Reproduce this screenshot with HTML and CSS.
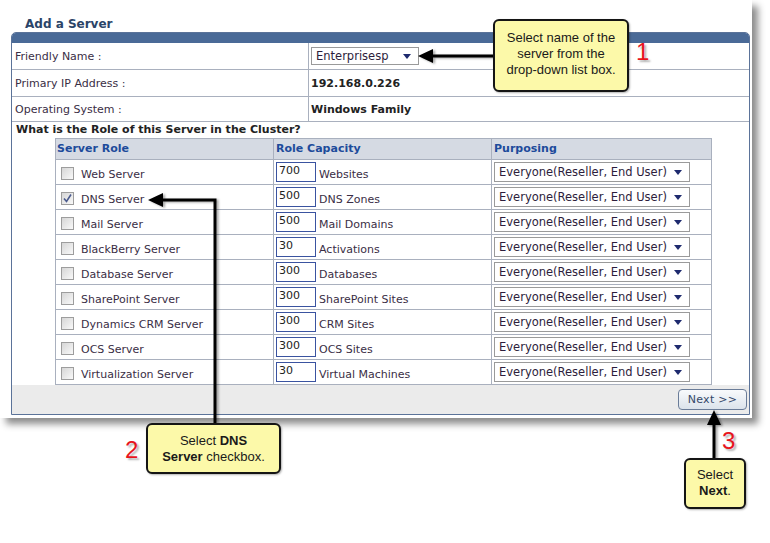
FILE: index.html
```html
<!DOCTYPE html>
<html lang="en">
<head>
  <meta charset="UTF-8">
  <title>Add a Server</title>
  <link rel="stylesheet" href="styles.css">
</head>
<body>
  <div class="screen">
    <h1 class="page-title">Add a Server</h1>

    <div class="panel">
      <div class="panel-head"></div>

      <div class="field-row row-name">
        <div class="field-label">Friendly Name :</div>
        <div class="field-value">
          <div class="combo combo-name">
            <span>Enterprisesp</span>
            <svg class="caret" width="8" height="5" viewBox="0 0 8 5"><polygon points="0,0 8,0 4,5"/></svg>
          </div>
        </div>
      </div>
      <div class="field-row row-ip">
        <div class="field-label">Primary IP Address :</div>
        <div class="field-value strong">192.168.0.226</div>
      </div>
      <div class="field-row row-os">
        <div class="field-label">Operating System :</div>
        <div class="field-value strong">Windows Family</div>
      </div>

      <div class="question">What is the Role of this Server in the Cluster?</div>

      <div class="roles-wrap">
        <div class="roles" id="roles">
          <div class="roles-head">Server Role</div>
          <div class="roles-head">Role Capacity</div>
          <div class="roles-head">Purposing</div>
        </div>
      </div>

      <div class="panel-foot">
        <button type="button" class="btn-next">Next &gt;&gt;</button>
      </div>
    </div>
  </div>

  <!-- annotations -->
  <svg class="marks" width="770" height="543" viewBox="0 0 770 543">
    <defs>
      <filter id="soft" x="-20%" y="-20%" width="140%" height="140%">
        <feDropShadow dx="2" dy="1" stdDeviation="1.2" flood-color="#000" flood-opacity="0.35"/>
      </filter>
    </defs>
    <g filter="url(#soft)" fill="#000" stroke="#000">
      <line x1="431" y1="56" x2="494" y2="56" stroke-width="3"/>
      <polygon points="418,56 433,49 433,63" stroke="none"/>

      <polyline points="215,423 215,200 161,200" fill="none" stroke-width="3"/>
      <polygon points="148,200 163,193 163,207" stroke="none"/>

      <line x1="714" y1="458" x2="714" y2="423" stroke-width="3"/>
      <polygon points="714,410 707,425 721,425" stroke="none"/>
    </g>
  </svg>

  <div class="callout c1">Select name of the<br>server from the<br>drop-down list box.</div>
  <div class="callout c2">Select <b>DNS</b><br><b>Server</b> checkbox.</div>
  <div class="callout c3">Select<br><b>Next</b>.</div>

  <span class="step-num n1">1</span>
  <span class="step-num n2">2</span>
  <span class="step-num n3">3</span>

  <script>
    var roles = [
      ["Web Server", 700, "Websites", false],
      ["DNS Server", 500, "DNS Zones", true],
      ["Mail Server", 500, "Mail Domains", false],
      ["BlackBerry Server", 30, "Activations", false],
      ["Database Server", 300, "Databases", false],
      ["SharePoint Server", 300, "SharePoint Sites", false],
      ["Dynamics CRM Server", 300, "CRM Sites", false],
      ["OCS Server", 300, "OCS Sites", false],
      ["Virtualization Server", 30, "Virtual Machines", false]
    ];
    var grid = document.getElementById("roles");
    var tick = '<svg width="11" height="11" viewBox="0 0 11 11"><polyline points="2,5.5 4.5,8.5 9,1.5" fill="none" stroke="#4b5b8e" stroke-width="1.6"/></svg>';
    var caret = '<svg class="caret" width="8" height="5" viewBox="0 0 8 5"><polygon points="0,0 8,0 4,5"/></svg>';
    roles.forEach(function (r) {
      var html = '';
      html += '<div class="roles-cell"><span class="check' + (r[3] ? ' checked' : '') + '">' + (r[3] ? tick : '') + '</span><span class="cell-text">' + r[0] + '</span></div>';
      html += '<div class="roles-cell"><input type="text" class="qty" value="' + r[1] + '"><span class="cell-text">' + r[2] + '</span></div>';
      html += '<div class="roles-cell"><div class="combo combo-purpose"><span>Everyone(Reseller, End User)</span>' + caret + '</div></div>';
      grid.insertAdjacentHTML("beforeend", html);
    });
  </script>
</body>
</html>
```

FILE: styles.css
```css
body {
  margin: 0;
  width: 770px;
  height: 543px;
  overflow: hidden;
  position: relative;
  background: #fff;
  font-family: "DejaVu Sans", Verdana, sans-serif;
  font-size: 11px;
  color: #3a2e45;
}

.screen {
  width: 752px;
  height: 418px;
  box-sizing: border-box;
  padding: 16px 0 0 11px;
  background: #fff;
  box-shadow: 6px 6px 7px rgba(0, 0, 0, 0.45);
}

.page-title {
  margin: 0 0 0 14px;
  font-size: 12px;
  line-height: 16px;
  font-weight: bold;
  color: #2b4468;
}

.panel {
  width: 739px;
  box-sizing: border-box;
  border: 1px solid #5b7399;
  border-radius: 5px 5px 0 0;
  overflow: hidden;
  background: #fff;
}

.panel-head {
  height: 10px;
  background: #4a6a97;
}

.field-row {
  display: grid;
  grid-template-columns: 296px 1fr;
  box-sizing: border-box;
  border-bottom: 1px solid #a9b0be;
}

.row-name { height: 27px; }
.row-ip { height: 27px; }
.row-os { height: 25px; }

.field-label {
  display: flex;
  align-items: center;
  padding-left: 3px;
}

.field-value {
  display: flex;
  align-items: center;
  padding-left: 2px;
  border-left: 1px solid #a9b0be;
}

.strong {
  font-weight: bold;
  color: #222;
}

.question {
  height: 16px;
  line-height: 16px;
  padding-left: 4px;
  font-weight: bold;
  color: #222;
}

.roles-wrap {
  padding-left: 43px;
}

.roles {
  display: grid;
  grid-template-columns: 218px 218px 220px;
  width: max-content;
  border-top: 1px solid #a9b0be;
  border-left: 1px solid #a9b0be;
}

.roles-head,
.roles-cell {
  box-sizing: border-box;
  border-right: 1px solid #a9b0be;
  border-bottom: 1px solid #a9b0be;
}

.roles-head {
  height: 21px;
  line-height: 20px;
  padding-left: 2px;
  background: #d5dae3;
  font-weight: bold;
  color: #1d4b9b;
}

.roles-head:first-child {
  padding-left: 1px;
}

.roles-cell {
  height: 25px;
  display: flex;
  align-items: flex-start;
  padding: 2px 0 0 2px;
}

.roles-cell:nth-child(3n+1) {
  padding-left: 5px;
}

.cell-text {
  margin-top: 6px;
  line-height: 13px;
}

.check {
  width: 13px;
  height: 13px;
  box-sizing: border-box;
  margin: 5px 7px 0 0;
  border: 1px solid #9d9d9d;
  background: linear-gradient(135deg, #d6d6d6, #f9f9f9);
  display: flex;
  align-items: center;
  justify-content: center;
}

.qty {
  width: 40px;
  height: 20px;
  box-sizing: border-box;
  margin: 0 3px 0 0;
  padding: 0 2px 4px;
  border: 1px solid #3a53a0;
  font: 11px "DejaVu Sans", Verdana, sans-serif;
  color: #222;
  outline: none;
}

.combo {
  display: flex;
  align-items: center;
  justify-content: space-between;
  box-sizing: border-box;
  height: 20px;
  padding: 0 7px 0 4px;
  border: 1px solid #9a9a9a;
  background: #fff;
  font-size: 11.5px;
  color: #2d1d3c;
}

.combo-name {
  width: 108px;
  height: 18px;
}

.combo-purpose {
  width: 196px;
}

.caret {
  fill: #1e2a6e;
}

.panel-foot {
  height: 29px;
  display: flex;
  justify-content: flex-end;
  align-items: flex-start;
  padding: 4px 2px 0 0;
  box-sizing: border-box;
  background: #ebebeb;
}

.btn-next {
  width: 69px;
  height: 21px;
  padding: 0;
  border: 1px solid #6a7c98;
  border-radius: 4px;
  background: linear-gradient(#f8fafc, #dce3eb);
  font: 11px "DejaVu Sans", Verdana, sans-serif;
  color: #34486a;
  letter-spacing: 0.3px;
}

/* annotations */
.marks {
  position: absolute;
  left: 0;
  top: 0;
}

.callout {
  position: absolute;
  box-sizing: border-box;
  border: 2px solid #151515;
  border-radius: 6px;
  background: #fcf9a9;
  box-shadow: 1px 1px 2px rgba(0, 0, 0, 0.3);
  font-family: "Liberation Sans", Arial, sans-serif;
  font-size: 13px;
  line-height: 16px;
  color: #1a1a1a;
  text-align: center;
}

.c1 { left: 493px; top: 19px; width: 136px; height: 73px; padding-top: 9px; }
.c2 { left: 146px; top: 423px; width: 135px; height: 51px; padding-top: 8px; }
.c3 { left: 684px; top: 458px; width: 62px; height: 51px; padding-top: 7px; }

.step-num {
  position: absolute;
  font-family: "Liberation Sans", Arial, sans-serif;
  font-size: 24px;
  line-height: 24px;
  color: #e8141c;
  text-shadow: 2px 2px 2px rgba(0, 0, 0, 0.3);
}

.n1 { left: 636px; top: 40px; }
.n2 { left: 125px; top: 438px; }
.n3 { left: 722px; top: 429px; }
```
